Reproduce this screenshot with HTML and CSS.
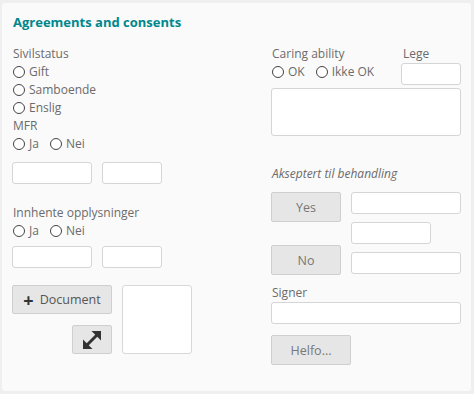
FILE: index.html
```html
<!DOCTYPE html>
<html>
<head>
<meta charset="utf-8">
<link rel="stylesheet" href="styles.css">
</head>
<body>
<div class="panel">
  <div class="title">Agreements and consents</div>
  <div class="cols">
    <div class="col-left">
      <div class="label">Sivilstatus</div>
      <label class="radio"><span class="circle"></span>Gift</label>
      <label class="radio"><span class="circle"></span>Samboende</label>
      <label class="radio"><span class="circle"></span>Enslig</label>
      <div class="label">MFR</div>
      <div class="radio-row">
        <label class="radio"><span class="circle"></span>Ja</label>
        <label class="radio"><span class="circle"></span>Nei</label>
      </div>
      <div class="input-row first">
        <div class="input w80"></div>
        <div class="input w60"></div>
      </div>
      <div class="label sect">Innhente opplysninger</div>
      <div class="radio-row">
        <label class="radio"><span class="circle"></span>Ja</label>
        <label class="radio"><span class="circle"></span>Nei</label>
      </div>
      <div class="input-row second">
        <div class="input w80"></div>
        <div class="input w60"></div>
      </div>
      <div class="doc-area">
        <div class="doc-buttons">
          <div class="btn doc-btn"><span class="plus">+</span>Document</div>
          <div class="btn expand-btn">
            <svg width="22" height="22" viewBox="0 0 22 22">
              <line x1="6" y1="16" x2="16" y2="6" stroke="#333" stroke-width="3"/>
              <polygon points="20,2 20,11.5 10.5,2" fill="#333"/>
              <polygon points="2,20 2,10.5 11.5,20" fill="#333"/>
            </svg>
          </div>
        </div>
        <div class="doc-box"></div>
      </div>
    </div>
    <div class="col-right">
      <div class="care-row">
        <div class="care">
          <div class="label">Caring ability</div>
          <div class="radio-row">
            <label class="radio"><span class="circle"></span>OK</label>
            <label class="radio"><span class="circle"></span>Ikke OK</label>
          </div>
        </div>
        <div class="lege">
          <div class="label">Lege</div>
          <div class="input lege-input"></div>
        </div>
      </div>
      <div class="input textarea"></div>
      <div class="label italic">Akseptert til behandling</div>
      <div class="accept">
        <div class="accept-buttons">
          <div class="btn yn">Yes</div>
          <div class="btn yn">No</div>
        </div>
        <div class="accept-inputs">
          <div class="input w110"></div>
          <div class="input w80"></div>
          <div class="input w110"></div>
        </div>
      </div>
      <div class="label signer">Signer</div>
      <div class="input full"></div>
      <div class="btn helfo">Helfo...</div>
    </div>
  </div>
</div>
</body>
</html>
```

FILE: styles.css
```css
html, body {
  margin: 0;
  padding: 0;
}
body {
  background: #efefef;
  font-family: "Open Sans", "DejaVu Sans", sans-serif;
  font-size: 12px;
  color: #6b6b6b;
  width: 474px;
  height: 394px;
  padding: 3px 3px 3px 2px;
  box-sizing: border-box;
}
.panel {
  background: #fafafa;
  border-radius: 3px;
  height: 388px;
  box-sizing: border-box;
  padding: 10px 10px 0 10px;
}
.title {
  font-weight: bold;
  font-size: 13px;
  color: #00878c;
  line-height: 18px;
  padding-left: 1px;
}
.cols {
  display: flex;
  margin-top: 14px;
}
.col-left {
  width: 260px;
  display: flex;
  flex-direction: column;
  align-items: flex-start;
}
.col-right {
  width: 190px;
  display: flex;
  flex-direction: column;
  align-items: flex-start;
}
.label {
  line-height: 18px;
  height: 18px;
  padding-left: 1px;
}
.radio {
  display: flex;
  align-items: center;
  line-height: 18px;
  height: 18px;
  padding-left: 1px;
}
.circle {
  width: 10px;
  height: 10px;
  border: 1px solid #444;
  border-radius: 50%;
  background: #fff;
  margin-right: 4px;
  flex: none;
}
.radio-row {
  display: flex;
  gap: 10px;
}
.input {
  background: #fff;
  border: 1px solid #d5d5d5;
  border-radius: 3px;
  height: 22px;
  box-sizing: border-box;
}
.w80 { width: 80px; }
.w60 { width: 60px; }
.w110 { width: 110px; }
.input-row {
  display: flex;
  gap: 10px;
}
.input-row.first { margin-top: 9px; }
.label.sect { margin-top: 20px; }
.input-row.second { margin-top: 6px; }
.doc-area {
  display: flex;
  gap: 10px;
  margin-top: 17px;
}
.doc-buttons {
  display: flex;
  flex-direction: column;
  align-items: flex-end;
  gap: 11px;
}
.btn {
  background: #e6e6e6;
  border: 1px solid #cfcfcf;
  border-radius: 2px;
  box-sizing: border-box;
  display: flex;
  align-items: center;
  justify-content: center;
  color: #777;
}
.doc-btn {
  width: 100px;
  height: 29px;
  color: #555;
  font-size: 12.5px;
}
.plus {
  font-size: 18px;
  font-weight: bold;
  color: #333;
  margin-right: 6px;
  line-height: 18px;
}
.expand-btn {
  width: 40px;
  height: 29px;
}
.doc-box {
  width: 70px;
  height: 69px;
  background: #fff;
  border: 1px solid #d8d8d8;
  border-radius: 3px;
  box-sizing: border-box;
}
.care-row {
  display: flex;
  width: 190px;
  justify-content: space-between;
}
.lege .label { padding-left: 2px; }
.lege-input {
  width: 60px;
  margin-top: 0;
}
.textarea {
  width: 190px;
  height: 48px;
  margin-top: 3px;
}
.italic {
  font-style: italic;
  margin-top: 29px;
}
.accept {
  display: flex;
  gap: 10px;
  margin-top: 9px;
}
.accept-buttons {
  display: flex;
  flex-direction: column;
  justify-content: space-between;
  height: 83px;
}
.yn {
  width: 70px;
  height: 30px;
  font-size: 12.5px;
}
.accept-inputs {
  display: flex;
  flex-direction: column;
  gap: 8px;
}
.signer { margin-top: 9px; }
.full { width: 190px; }
.helfo {
  width: 80px;
  height: 30px;
  margin-top: 11px;
  font-size: 12.5px;
}
```
